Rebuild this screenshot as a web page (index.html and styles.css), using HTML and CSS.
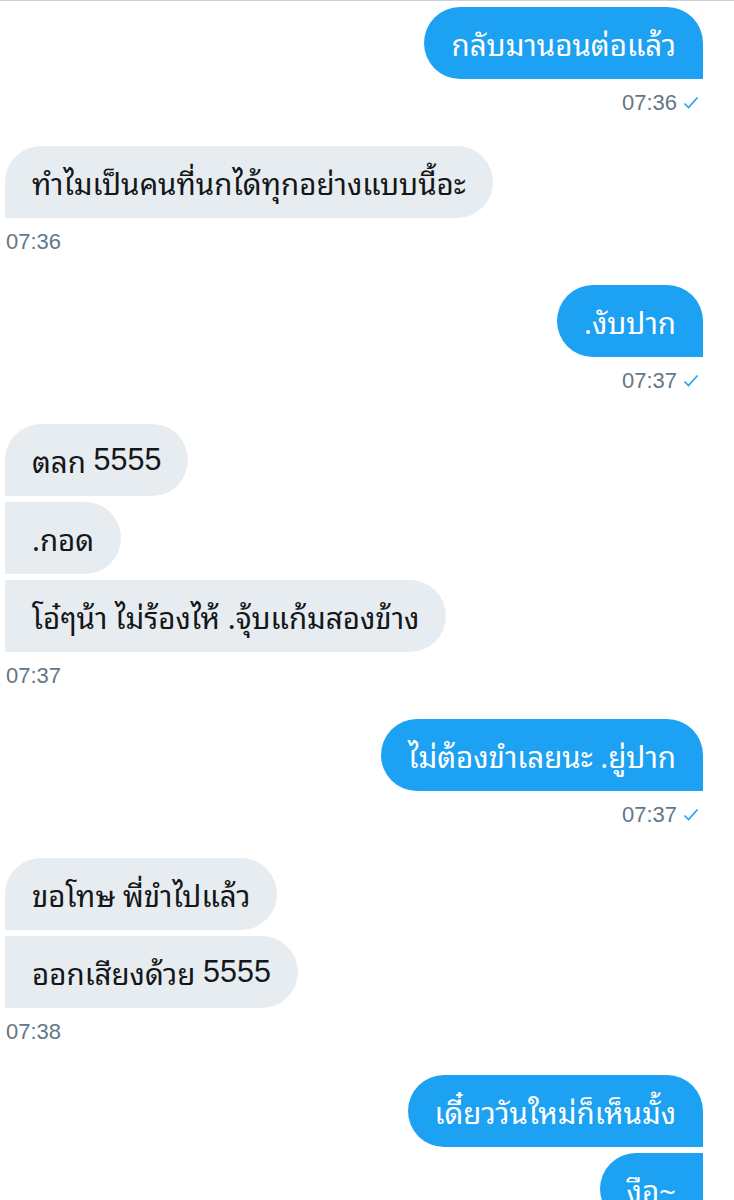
FILE: index.html
```html
<!DOCTYPE html>
<html lang="th">
<head>
<meta charset="utf-8">
<title>Messages</title>
<link rel="stylesheet" href="styles.css">
</head>
<body>
<div class="thread">
  <div class="group sent">
    <div class="bubble">กลับมานอนต่อแล้ว</div>
    <div class="meta"><span class="time">07:36</span><svg class="check" viewBox="0 0 16 14" width="16" height="14"><path d="M1.5 7.5 L5.5 11.5 L14.5 1.5" fill="none" stroke="#1da1f2" stroke-width="1.6"/></svg></div>
  </div>
  <div class="group recv">
    <div class="bubble">ทำไมเป็นคนที่นกได้ทุกอย่างแบบนี้อะ</div>
    <div class="meta"><span class="time">07:36</span></div>
  </div>
  <div class="group sent">
    <div class="bubble">.งับปาก</div>
    <div class="meta"><span class="time">07:37</span><svg class="check" viewBox="0 0 16 14" width="16" height="14"><path d="M1.5 7.5 L5.5 11.5 L14.5 1.5" fill="none" stroke="#1da1f2" stroke-width="1.6"/></svg></div>
  </div>
  <div class="group recv">
    <div class="bubble">ตลก <span class="num">5555</span></div>
    <div class="bubble">.กอด</div>
    <div class="bubble">โอ๋ๆน้า ไม่ร้องไห้ .จุ้บแก้มสองข้าง</div>
    <div class="meta"><span class="time">07:37</span></div>
  </div>
  <div class="group sent">
    <div class="bubble">ไม่ต้องขำเลยนะ .ยู่ปาก</div>
    <div class="meta"><span class="time">07:37</span><svg class="check" viewBox="0 0 16 14" width="16" height="14"><path d="M1.5 7.5 L5.5 11.5 L14.5 1.5" fill="none" stroke="#1da1f2" stroke-width="1.6"/></svg></div>
  </div>
  <div class="group recv">
    <div class="bubble">ขอโทษ พี่ขำไปแล้ว</div>
    <div class="bubble">ออกเสียงด้วย <span class="num">5555</span></div>
    <div class="meta"><span class="time">07:38</span></div>
  </div>
  <div class="group sent">
    <div class="bubble">เดี๋ยววันใหม่ก็เห็นมั้ง</div>
    <div class="bubble">งือ~</div>
  </div>
</div>
</body>
</html>
```
FILE: styles.css
```css
html, body {
  margin: 0;
  padding: 0;
  background: #ffffff;
}
body {
  font-family: "Noto Sans Thai Looped", "Noto Sans Thai", "Noto Sans", "DejaVu Sans", sans-serif;
  border-top: 1px solid #ccd1d6;
  overflow: hidden;
}
.thread {
  display: flex;
  flex-direction: column;
  gap: 31px;
  padding: 6px 31px 0 5px;
}
.group {
  display: flex;
  flex-direction: column;
  gap: 6px;
}
.sent { align-items: flex-end; }
.recv { align-items: flex-start; }
.bubble {
  box-sizing: border-box;
  height: 72px;
  display: flex;
  align-items: center;
  padding: 0 27px 2px;
  font-size: 29.5px;
  white-space: nowrap;
  border-radius: 36px;
}
.sent .bubble {
  background: #1da1f2;
  color: #ffffff;
  border-bottom-right-radius: 0;
}
.sent .bubble + .bubble { border-top-right-radius: 0; }
.recv .bubble {
  background: #e6ecf0;
  color: #14171a;
  border-bottom-left-radius: 0;
}
.recv .bubble + .bubble { border-top-left-radius: 0; }
.num {
  font-family: "Liberation Sans", Arial, sans-serif;
  font-size: 30.5px;
  margin-left: 0.25em;
}
.meta {
  margin-top: 6px;
  height: 24px;
  display: flex;
  align-items: center;
  gap: 6px;
  font-family: "Liberation Sans", Arial, sans-serif;
  font-size: 22px;
  color: #657786;
}
.sent .meta { padding-right: 4px; }
.recv .meta { padding-left: 1px; }
.check { display: block; }
```
